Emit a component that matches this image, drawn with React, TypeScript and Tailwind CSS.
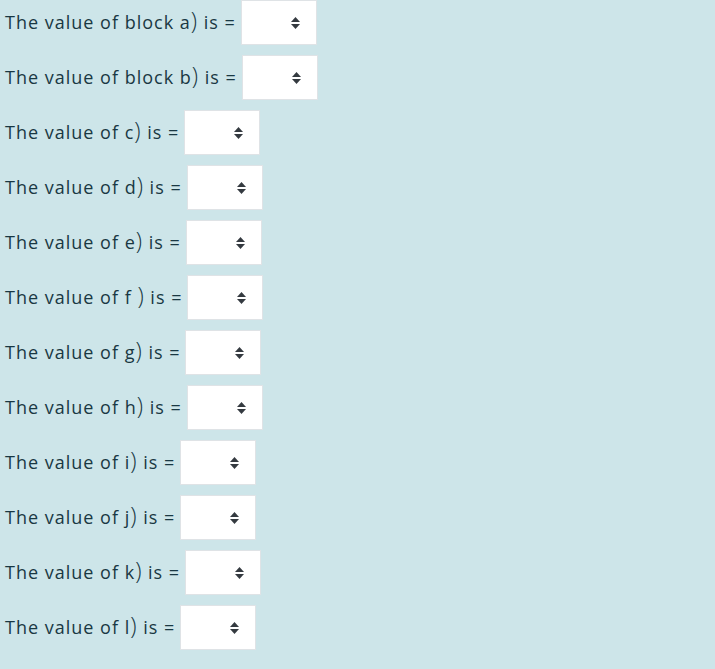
import React from "react";

const rows = [
  ["The value of block a", " is ="],
  ["The value of block b", " is ="],
  ["The value of c", " is ="],
  ["The value of d", " is ="],
  ["The value of e", " is ="],
  ["The value of f ", " is ="],
  ["The value of g", " is ="],
  ["The value of h", " is ="],
  ["The value of i", " is ="],
  ["The value of j", " is ="],
  ["The value of k", " is ="],
  ["The value of l", " is ="],
];

const SelectBox = () => (
  <div className="flex h-[45px] w-[76px] items-center justify-end border border-[#dfe3e6] bg-white pr-[16px]">
    <svg width="9" height="12" viewBox="0 0 9 12">
      <path d="M4.5 0 L9 5 L0 5 Z" fill="#343a40" />
      <path d="M4.5 12 L9 7 L0 7 Z" fill="#343a40" />
    </svg>
  </div>
);

export default function App() {
  return (
    <div
      className="min-h-screen bg-[#cde5e9] pl-[5px]"
      style={{ fontFamily: "'Open Sans', 'Noto Sans', sans-serif" }}
    >
      {rows.map(([a, b]) => (
        <div key={a} className="mb-[10px] flex items-center gap-[5px]">
          <span className="whitespace-pre text-[18px] tracking-[1px] text-[#193843]">
            {a}
            <span className="text-[23px] font-light leading-none">)</span>
            {b}
          </span>
          <SelectBox />
        </div>
      ))}
    </div>
  );
}
